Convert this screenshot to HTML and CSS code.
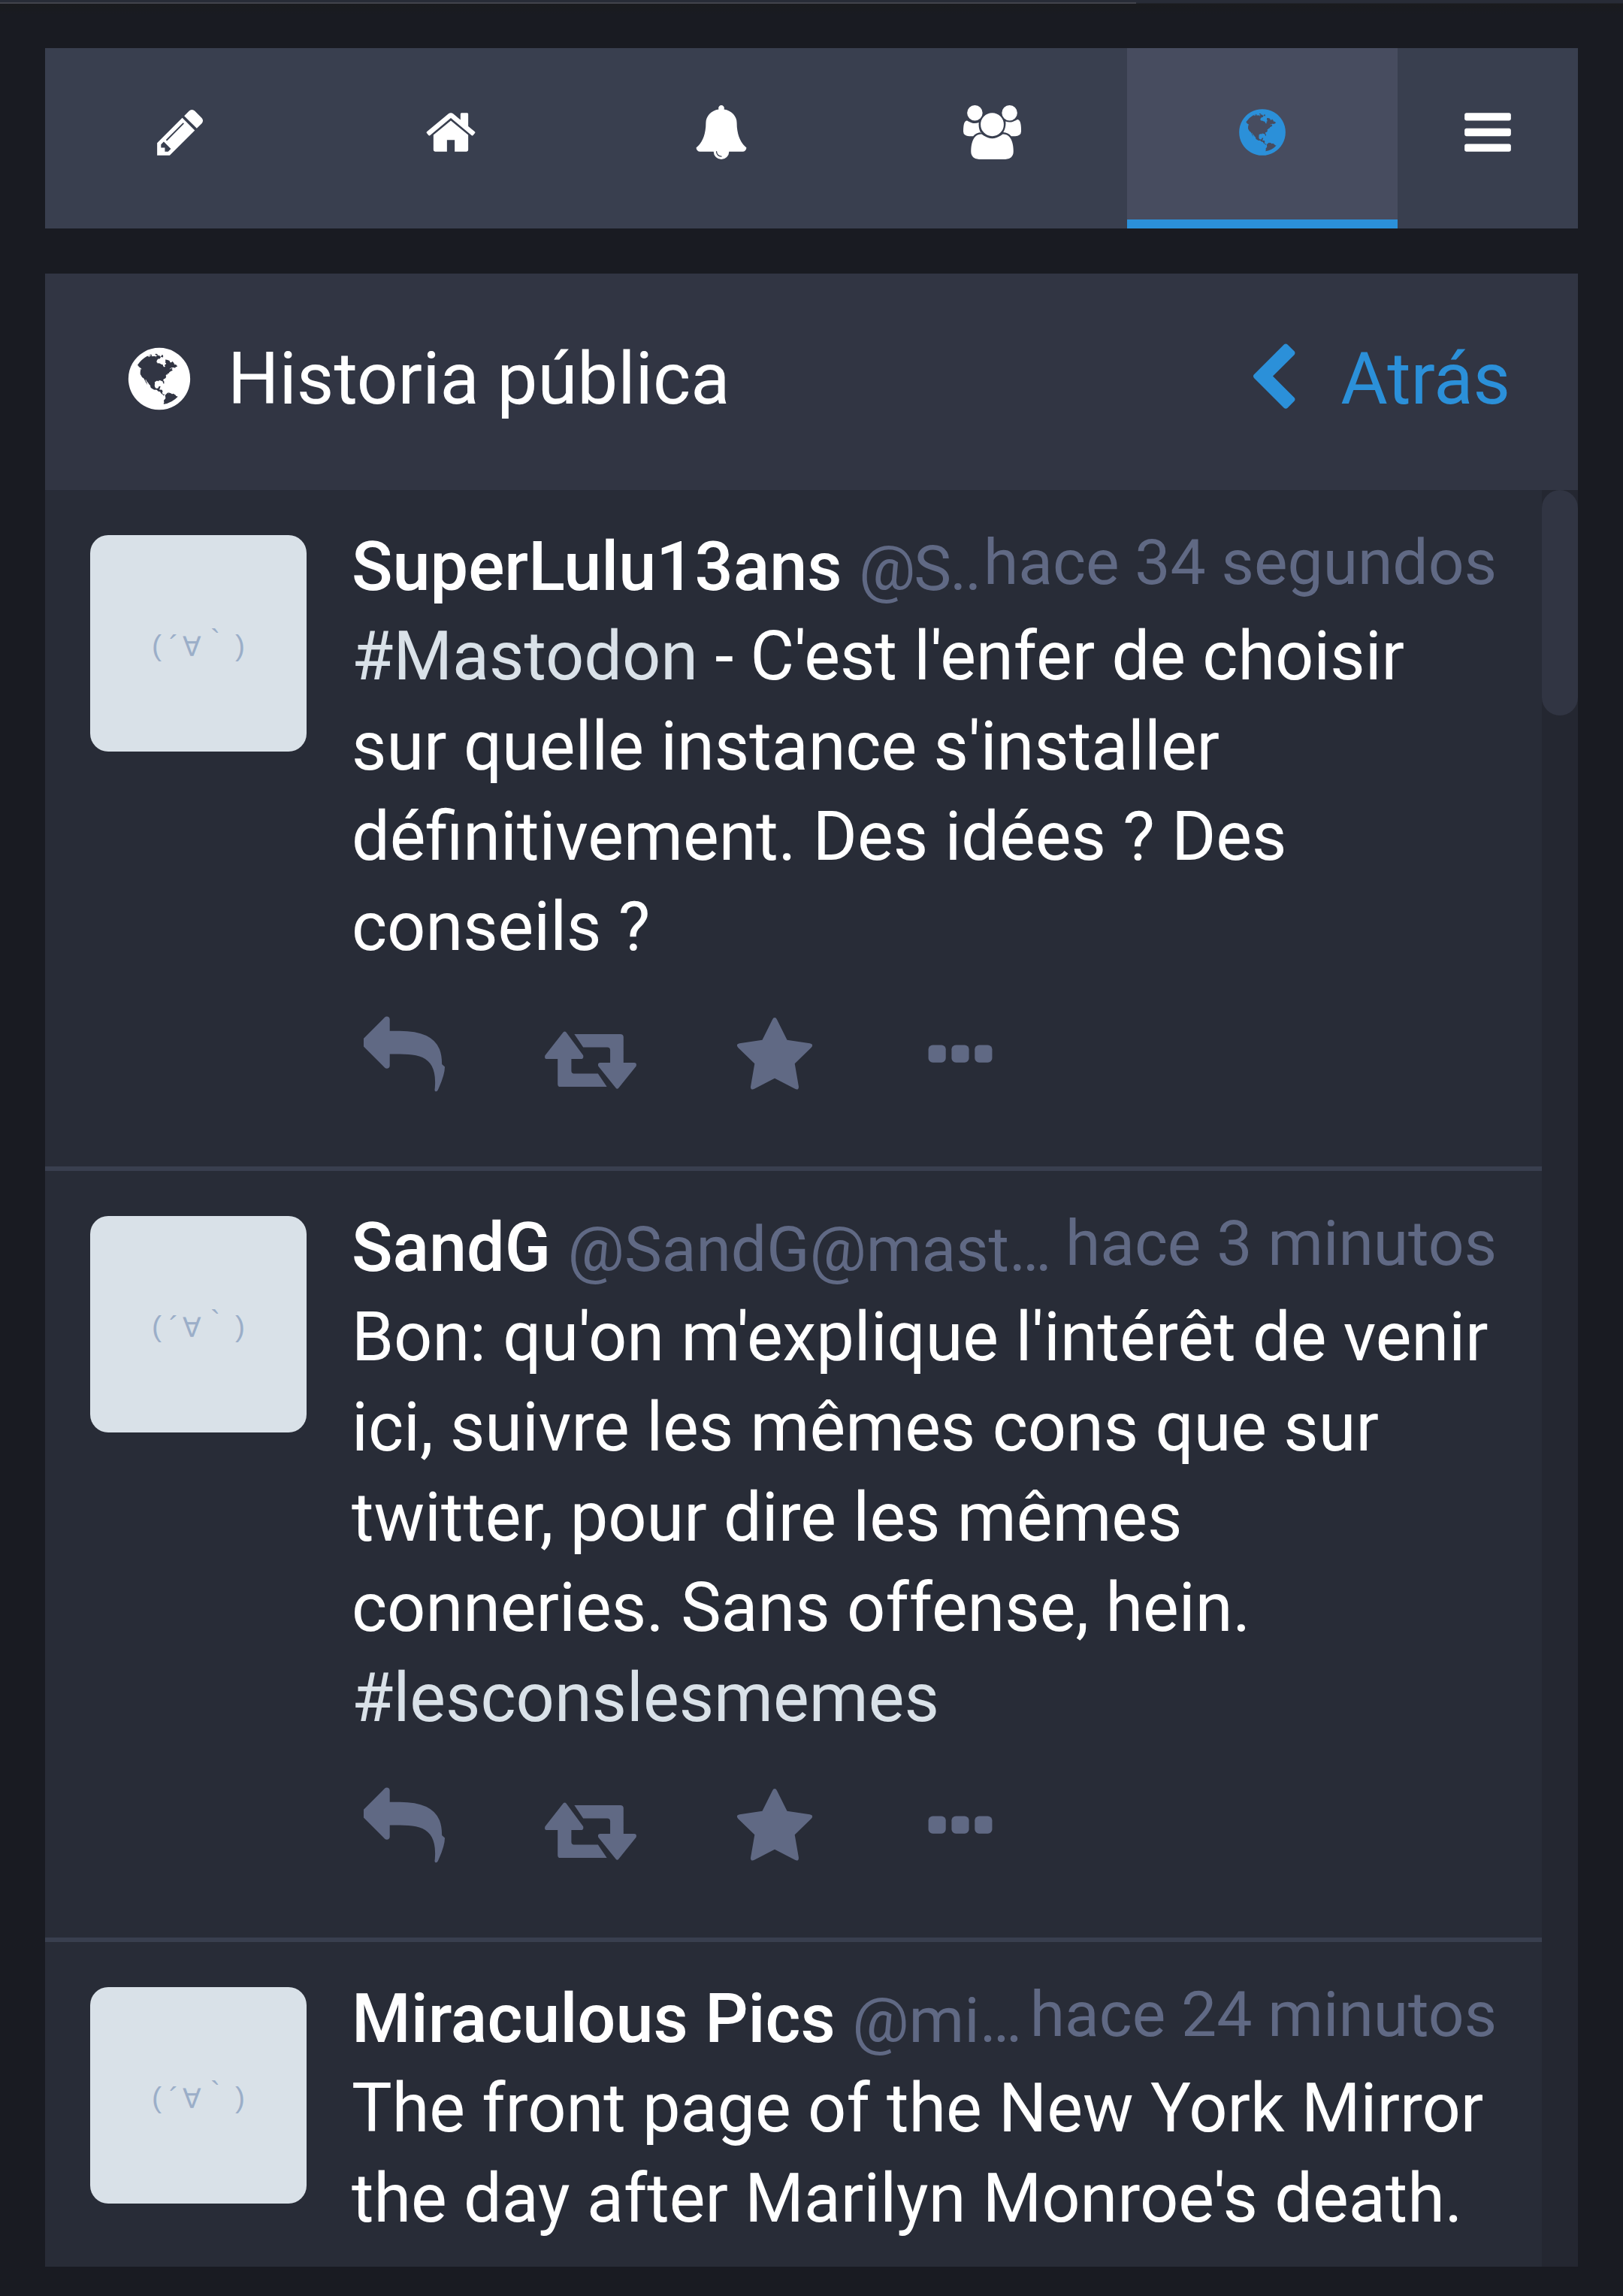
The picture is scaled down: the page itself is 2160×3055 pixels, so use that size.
FILE: index.html
```html
<!DOCTYPE html>
<html lang="es">
<head>
<meta charset="utf-8">
<title>Mastodon</title>
<link rel="stylesheet" href="styles.css">
</head>
<body>
<svg class="defs" aria-hidden="true">
<symbol id="pencil" viewBox="0 0 1792 1792"><path d="M491 1536l91-91-235-235-91 91v107h128v128h107zm523-928q0-22-22-22-10 0-17 7l-542 542q-7 7-7 17 0 22 22 22 10 0 17-7l542-542q7-7 7-17zm-54-192l416 416-832 832h-416v-416zm683 96q0 53-37 90l-166 166-416-416 166-165q36-38 90-38 53 0 91 38l235 234q37 39 37 91z"/></symbol>
<symbol id="home" viewBox="0 0 1792 1792"><path d="M1472 992v480q0 26-19 45t-45 19h-384v-384h-256v384h-384q-26 0-45-19t-19-45v-480q0-1 .5-3t.5-3l575-474 575 474q1 2 1 6zm223-69l-62 74q-8 9-21 11h-3q-13 0-21-7l-692-577-692 577q-12 8-24 7-13-2-21-11l-62-74q-8-10-7-23.5t11-21.5l719-599q32-26 76-26t76 26l244 204v-195q0-14 9-23t23-9h192q14 0 23 9t9 23v408l219 182q10 8 11 21.5t-7 23.5z"/></symbol>
<symbol id="bell" viewBox="0 0 1792 1792"><path d="M912 1696q0-16-16-16-59 0-101.5-42.5t-42.5-101.5q0-16-16-16t-16 16q0 73 51.5 124.5t124.5 51.5q16 0 16-16zm816-288q0 52-38 90t-90 38h-448q0 106-75 181t-181 75-181-75-75-181h-448q-52 0-90-38t-38-90q50-42 91-88t85-119.5 74.5-158.5 50-206 19.5-260q0-152 117-282.5t307-158.5q-8-19-8-39 0-40 28-68t68-28 68 28 28 68q0 20-8 39 190 28 307 158.5t117 282.5q0 139 19.5 260t50 206 74.5 158.5 85 119.5 91 88z"/></symbol>
<symbol id="users" viewBox="-64 0 1920 1792"><path d="M529 896q-162 5-265 128h-134q-82 0-138-40.5t-56-118.5q0-353 124-353 6 0 43.5 21t97.5 42.5 119 21.5q67 0 133-23-5 37-5 66 0 159 81 293zm1071 637q0 120-73 189.5t-194 69.5h-874q-121 0-194-69.5t-73-189.5q0-53 3.5-103.5t14-109 26.5-108.5 43-97.5 62-81 85.5-53.5 111.5-20q10 0 43 21.5t73 48 107 48 135 21.5 135-21.5 107-48 73-48 43-21.5q61 0 111.5 20t85.5 53.5 62 81 43 97.5 26.5 108.5 14 109 3.5 103.5zm-1024-1277q0 106-75 181t-181 75-181-75-75-181 75-181 181-75 181 75 75 181zm704 384q0 159-112.5 271.5t-271.5 112.5-271.5-112.5-112.5-271.5 112.5-271.5 271.5-112.5 271.5 112.5 112.5 271.5zm576 225q0 78-56 118.5t-138 40.5h-134q-103-123-265-128 81-134 81-293 0-29-5-66 66 23 133 23 59 0 119-21.5t97.5-42.5 43.5-21q124 0 124 353zm-128-609q0 106-75 181t-181 75-181-75-75-181 75-181 181-75 181 75 75 181z"/></symbol>
<symbol id="globe" viewBox="0 0 1792 1792"><path d="M896 128q209 0 385.5 103t279.5 279.5 103 385.5-103 385.5-279.5 279.5-385.5 103-385.5-103-279.5-279.5-103-385.5 103-385.5 279.5-279.5 385.5-103zm274 521q-2 1-9.5 9.5t-13.5 9.5q2 0 4.5-5t5-11 3.5-7q6-7 22-15 14-6 52-12 34-8 51 11-2-2 9.5-13t14.5-12q3-2 15-4.5t15-7.5l2-22q-12 1-17.5-7t-6.5-21q0 2-6 8 0-7-4.5-8t-11.5 1-9 1q-10-3-15-7.5t-8-16.5-4-15q-2-5-9.5-10.5t-9.5-10.5q-1-2-2.5-5.5t-3-6.5-4-5.5-5.5-2.5-7 5-7.5 10-4.5 5q-3-2-6-1.5t-4.5 1-4.5 3-5 3.5q-3 2-8.5 3t-8.5 2q15-5-1-11-10-4-16-3 9-4 7.5-12t-8.5-14h5q-1-4-8.5-8.5t-17.5-8.5-13-6q-8-5-34-9.5t-33-.5q-5 6-4.5 10.5t4 14 3.5 12.5q1 6-5.5 13t-6.5 12q0 7 14 15.5t10 21.5q-3 8-16 16t-16 12q-5 8-1.5 18.5t10.5 16.5q2 2 1.5 4t-3.5 4.5-5.5 4-6.5 3.5l-3 2q-11 5-20.5-6t-13.5-26q-7-25-16-30-23-8-29 1-5-13-41-26-25-9-58-4 6-1 0-15-7-15-19-12 3-6 4-17.5t1-13.5q3-13 12-23 1-1 7-8.5t9.5-13.5.5-6q35 4 50-11 5-5 11.5-17t10.5-17q9-6 14-5.5t14.5 5.5 14.5 5q14 1 15.5-11t-7.5-20q12 1 3-17-4-7-8-9-12-4-27 5-8 4 2 8-1-1-9.5 10.5t-16.5 17.5-16-5q-1-1-5.5-13.5t-9.5-13.5q-8 0-16 15 3-8-11-15t-24-8q19-12-8-27-7-4-20.5-5t-19.5 4q-5 7-5.5 11.5t5 8 10.5 5.5 11.5 4 8.5 3q14 10 8 14-2 1-8.5 3.5t-11.5 4.5-6 4q-3 4 0 14t-2 14q-5-5-9-17.5t-7-16.5q7 9-25 6l-10-1q-4 0-16 2t-20.5 1-13.5-8q-4-8 0-20 1-4 4-2-4-3-11-9.5t-10-8.5q-46 15-94 41 6 1 12-1 5-2 13-6.5t10-5.5q34-14 42-7l5-5q14 16 20 25-7-4-30-1-20 6-22 12 7 12 5 18-4-3-11.5-10t-14.5-11-15-5q-16 0-22 1-146 80-235 222 7 7 12 8 4 1 5 9t2.5 11 11.5-3q9 8 3 19 1-1 44 27 19 17 21 21 3 11-10 18-1-2-9-9t-9-4q-3 5 .5 18.5t10.5 12.5q-7 0-9.5 16t-2.5 35.5-1 23.5l2 1q-3 12 5.5 34.5t21.5 19.5q-13 3 20 43 6 8 8 9 3 2 12 7.5t15 10 10 10.5q4 5 10 22.5t14 23.5q-2 6 9.5 20t10.5 23q-1 0-2.5 1t-2.5 1q3 7 15.5 14t15.5 13q1 3 2 10t3 11 8 2q2-20-24-62-15-25-17-29-3-5-5.5-15.5t-4.5-14.5q2 0 6 1.5t8.5 3.5 7.5 4 2 3q-3 7 2 17.5t12 18.5 17 19 12 13q6 6 14 19.5t0 13.5q9 0 20 10.5t17 19.5q5 8 8 26t5 24q2 7 8.5 13.5t12.5 9.5l16 8 13 7q5 2 18.5 10.5t21.5 11.5q10 4 16 4t14.5-2.5 13.5-3.5q15-2 29 15t21 21q36 19 55 11-2 1 .5 7.5t8 15.5 9 14.5 5.5 8.5q5 6 18 15t18 15q6-4 7-9-3 8 7 20t18 10q14-3 14-32-31 15-49-18 0-1-2.5-5.5t-4-8.5-2.5-8.5 0-7.5 5-3q9 0 10-3.5t-2-12.5-4-13q-1-8-11-20t-12-15q-5 9-16 8t-16-9q0 1-1.5 5.5t-1.5 6.5q-13 0-15-1 1-3 2.5-17.5t3.5-22.5q1-4 5.5-12t7.5-14.5 4-12.5-4.5-9.5-17.5-2.5q-19 1-26 20-1 3-3 10.5t-5 11.5-9 7q-7 3-24 2t-24-5q-13-8-22.5-29t-9.5-37q0-10 2.5-26.5t3-25-5.5-24.5q3-2 9-9.5t10-10.5q2-1 4.5-1.5t4.5 0 4-1.5 3-6q-1-1-4-3-3-3-4-3 7 3 28.5-1.5t27.5 1.5q15 11 22-2 0-1-2.5-9.5t-.5-13.5q5 27 29 9 3 3 15.5 5t17.5 5q3 2 7 5.5t5.5 4.5 5-.5 8.5-6.5q10 14 12 24 11 40 19 44 7 3 11 2t4.5-9.5 0-14-1.5-12.5l-1-8v-18l-1-8q-15-3-18.5-12t1.5-18.5 15-18.5q1-1 8-3.5t15.5-6.5 12.5-8q21-19 15-35 7 0 11-9-1 0-5-3t-7.5-5-4.5-2q9-5 2-16 5-3 7.5-11t7.5-10q9 12 21 2 7-8 1-16 5-7 20.5-10.5t18.5-9.5q7 2 8-2t1-12 3-12q4-5 15-9t13-5l17-11q3-4 0-4 18 2 31-11 10-11-6-20 3-6-3-9.5t-15-5.5q3-1 11.5-.5t10.5-1.5q15-10-7-16-17-5-43 12zm-163 877q206-36 351-189-3-3-12.5-4.5t-12.5-3.5q-18-7-24-8 1-7-2.5-13t-8-9-12.5-8-11-7q-2-2-7-6t-7-5.5-7.5-4.5-8.5-2-10 1l-3 1q-3 1-5.5 2.5t-5.5 3-4 3 0 2.5q-21-17-36-22-5-1-11-5.5t-10.5-7-10-1.5-11.5 7q-5 5-6 15t-2 13q-7-5 0-17.5t2-18.5q-3-6-10.5-4.5t-12 4.5-11.5 8.5-9 6.5-8.5 5.5-8.5 7.5q-3 4-6 12t-5 11q-2-4-11.5-6.5t-9.5-5.5q2 10 4 35t5 38q7 31-12 48-27 25-29 40-4 22 12 26 0 7-8 20.5t-7 21.5q0 6 2 16z"/></symbol>
<symbol id="bars" viewBox="0 0 1792 1792"><path d="M1664 1344v128q0 26-19 45t-45 19h-1408q-26 0-45-19t-19-45v-128q0-26 19-45t45-19h1408q26 0 45 19t19 45zm0-512v128q0 26-19 45t-45 19h-1408q-26 0-45-19t-19-45v-128q0-26 19-45t45-19h1408q26 0 45 19t19 45zm0-512v128q0 26-19 45t-45 19h-1408q-26 0-45-19t-19-45v-128q0-26 19-45t45-19h1408q26 0 45 19t19 45z"/></symbol>
<symbol id="chevron" viewBox="0 0 1792 1792"><path d="M1427 301l-531 531 531 531q19 19 19 45t-19 45l-166 166q-19 19-45 19t-45-19l-742-742q-19-19-19-45t19-45l742-742q19-19 45-19t45 19l166 166q19 19 19 45t-19 45z"/></symbol>
<symbol id="reply" viewBox="0 0 1792 1792"><path d="M1792 1120q0 166-127 451-3 7-10.5 24t-13.5 30-13 22q-12 17-28 17-15 0-23.5-10t-8.500-25q0-9 2.500-26.500t2.500-23.500q5-68 5-123 0-112-19.500-200.500t-54-153.500-89-112-117.500-76.500-145-45.500-166-22.500-187-6.500h-224v256q0 26-19 45t-45 19-45-19l-512-512q-19-19-19-45t19-45l512-512q19-19 45-19t45 19 19 45v256h224q713 0 875 403 53 134 53 333z"/></symbol>
<symbol id="boost" viewBox="0 0 126 80" preserveAspectRatio="none"><path d="M26 1.500Q28 -.5 30 1.500L53 33Q54 38 50 38H37V54Q37 58 41 58H73L85 76H22Q18.500 76 18.500 72V38H4Q0 38 1.500 33ZM41 4H103Q107.500 4 107.500 8V43H122Q126 43 124.500 48L101 77.500Q99 80 97 77.500L73.500 48Q72 43 76 43H89.500V26Q89.500 22 85.500 22H53Z"/></symbol>
<symbol id="star" viewBox="0 0 1792 1792"><path d="M1728 647q0 22-26 48l-363 354 86 500q1 7 1 20 0 21-10.500 35.500t-30.500 14.500q-19 0-40-12l-449-236-449 236q-22 12-40 12-21 0-31.500-14.500t-10.500-35.500q0-6 2-20l86-500-364-354q-25-27-25-48 0-37 56-46l502-73 225-455q19-41 49-41t49 41l225 455 502 73q56 9 56 46z"/></symbol>
<symbol id="more" viewBox="0 0 1792 1792"><rect x="192" y="640" width="384" height="384" rx="96"/><rect x="704" y="640" width="384" height="384" rx="96"/><rect x="1216" y="640" width="384" height="384" rx="96"/></symbol>
</svg>
<div class="loading"><div class="loading-bar"></div></div>
<nav class="tabs">
<a class="tab"><svg class="fa"><use href="#pencil"/></svg></a>
<a class="tab"><svg class="fa"><use href="#home"/></svg></a>
<a class="tab"><svg class="fa"><use href="#bell"/></svg></a>
<a class="tab"><svg class="fa fa-users"><use href="#users"/></svg></a>
<a class="tab active"><svg class="fa"><use href="#globe"/></svg></a>
<a class="tab menu"><svg class="fa"><use href="#bars"/></svg></a>
</nav>
<main class="column">
<header class="column-header">
<svg class="fa"><use href="#globe"/></svg><h1>Historia pública</h1>
<a class="back"><svg class="fa"><use href="#chevron"/></svg>Atrás</a>
</header>
<div class="scroll">
<div class="feed">
<article class="status">
<svg class="avatar" viewBox="0 0 288 288"><text x="82" y="160">(</text><text x="105" y="161">´</text><text class="mouth" x="123" y="161">∀</text><text x="160" y="153">`</text><text x="193" y="160">)</text></svg>
<div class="body">
<div class="meta"><div class="who"><strong>SuperLulu13ans</strong> <span class="clipped">@S..</span></div><time>hace 34 segundos</time></div>
<p><a>#Mastodon</a> - C'est l'enfer de choisir<br>sur quelle instance s'installer<br>définitivement. Des idées ? Des<br>conseils ?</p>
<div class="actions"><svg><use href="#reply"/></svg><svg class="boost"><use href="#boost"/></svg><svg><use href="#star"/></svg><svg><use href="#more"/></svg></div>
</div>
</article>
<article class="status">
<svg class="avatar" viewBox="0 0 288 288"><text x="82" y="160">(</text><text x="105" y="161">´</text><text class="mouth" x="123" y="161">∀</text><text x="160" y="153">`</text><text x="193" y="160">)</text></svg>
<div class="body">
<div class="meta"><div class="who"><strong>SandG</strong> <span>@SandG@mast…</span></div><time>hace 3 minutos</time></div>
<p>Bon: qu'on m'explique l'intérêt de venir<br>ici, suivre les mêmes cons que sur<br>twitter, pour dire les mêmes<br>conneries. Sans offense, hein.<br><a>#lesconslesmemes</a></p>
<div class="actions"><svg><use href="#reply"/></svg><svg class="boost"><use href="#boost"/></svg><svg><use href="#star"/></svg><svg><use href="#more"/></svg></div>
</div>
</article>
<article class="status">
<svg class="avatar" viewBox="0 0 288 288"><text x="82" y="160">(</text><text x="105" y="161">´</text><text class="mouth" x="123" y="161">∀</text><text x="160" y="153">`</text><text x="193" y="160">)</text></svg>
<div class="body">
<div class="meta"><div class="who"><strong>Miraculous Pics</strong> <span>@mi…</span></div><time>hace 24 minutos</time></div>
<p>The front page of the New York Mirror<br>the day after Marilyn Monroe's death.</p>
</div>
</article>
</div>
<div class="track"><div class="thumb"></div></div>
</div>
</main>
</body>
</html>
```
FILE: styles.css
```css
* { box-sizing: border-box; }
body { margin: 0; height: 3055px; overflow: hidden; background: #191b22; color: #fff; font-family: Roboto, sans-serif; }
svg { display: block; fill: currentColor; flex: none; }
.defs { width: 0; height: 0; position: absolute; }
.loading { height: 64px; background: linear-gradient(#282c37 0 4px, #1a1b1e 5px, #191b22 20px); padding-top: 3px; }
.loading-bar { width: 1512px; height: 2px; background: #42434c; }
.tabs { display: flex; width: 2040px; height: 240px; margin: 0 60px 60px; background: #393f4f; }
.tab { width: 360px; padding-top: 76px; display: flex; justify-content: center; }
.tab .fa { width: 72px; height: 72px; }
.tab .fa-users { width: 77px; }
.tab.active { background: #474c5f; color: #2b90d9; border-bottom: 12px solid #2b90d9; }
.tab.menu { width: 240px; }
.column { width: 2040px; height: 2652px; margin-left: 60px; display: flex; flex-direction: column; background: #282c37; }
.column-header { height: 288px; flex: none; display: flex; align-items: center; padding: 0 90px 8px 104px; background: #313543; font-size: 96px; }
.column-header .fa { width: 96px; height: 96px; }
h1 { margin: 0 auto 0 43px; font-size: 96px; font-weight: 400; }
.back { display: flex; align-items: center; gap: 42px; color: #2b90d9; }
.scroll { flex: 1; min-height: 0; display: flex; overflow: hidden; }
.feed { width: 1992px; flex: none; }
.track { width: 48px; background: #242731; }
.thumb { height: 300px; border-radius: 24px; background: #313543; }
.status { display: flex; gap: 60px; padding: 60px 60px 90px; border-bottom: 6px solid #393f4f; }
.status:last-child { border: 0; }
.avatar { width: 288px; height: 288px; border-radius: 24px; background: #d9e1e8; color: #9baec8; font-family: "Liberation Sans", sans-serif; font-size: 39px; }
.avatar .mouth { font-family: "DejaVu Sans", sans-serif; font-size: 36px; }
.body { width: 1524px; flex: none; }
.meta { display: flex; justify-content: space-between; height: 102px; white-space: nowrap; font-size: 84px; line-height: 74px; color: #606984; }
.who { line-height: 86px; font-size: 90px; }
.who strong { font-weight: 500; color: #fff; }
.who span { font-size: 84px; }
.who .clipped { letter-spacing: -2px; }
p { margin: 0; font-size: 90px; line-height: 120px; white-space: nowrap; }
p a { color: #d9e1e8; }
.actions { display: flex; gap: 138.700px; margin: 58px 0 0 15.500px; height: 110px; color: #606984; }
.actions svg { width: 108px; height: 108px; }
.actions .boost { width: 124px; height: 78px; margin: 20px -10px 0 -6px; }
```
